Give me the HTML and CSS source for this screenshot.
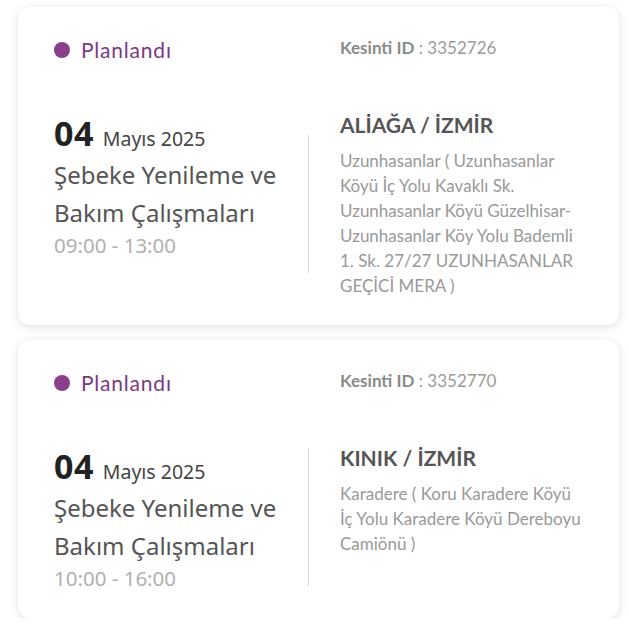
FILE: index.html
```html
<!DOCTYPE html>
<html lang="tr">
<head>
<meta charset="utf-8">
<link rel="stylesheet" href="styles.css">
</head>
<body>
<div class="list">
  <div class="card">
    <div class="top">
      <div class="status"><span class="dot"></span><span>Planlandı</span></div>
      <div class="kid"><b>Kesinti ID</b> : 3352726</div>
    </div>
    <div class="body">
      <div class="left">
        <div class="date"><span class="day">04</span> <span class="month">Mayıs 2025</span></div>
        <div class="title">Şebeke Yenileme ve Bakım Çalışmaları</div>
        <div class="time">09:00 - 13:00</div>
      </div>
      <div class="divider"></div>
      <div class="right">
        <div class="loc">ALİAĞA / İZMİR</div>
        <div class="addr">Uzunhasanlar ( Uzunhasanlar Köyü İç Yolu Kavaklı Sk. Uzunhasanlar Köyü Güzelhisar-Uzunhasanlar Köy Yolu Bademli 1. Sk. 27/27 UZUNHASANLAR GEÇİCİ MERA )</div>
      </div>
    </div>
  </div>
  <div class="card">
    <div class="top">
      <div class="status"><span class="dot"></span><span>Planlandı</span></div>
      <div class="kid"><b>Kesinti ID</b> : 3352770</div>
    </div>
    <div class="body">
      <div class="left">
        <div class="date"><span class="day">04</span> <span class="month">Mayıs 2025</span></div>
        <div class="title">Şebeke Yenileme ve Bakım Çalışmaları</div>
        <div class="time">10:00 - 16:00</div>
      </div>
      <div class="divider"></div>
      <div class="right">
        <div class="loc">KINIK / İZMİR</div>
        <div class="addr">Karadere ( Koru Karadere Köyü İç Yolu Karadere Köyü Dereboyu Camiönü )</div>
      </div>
    </div>
  </div>
</div>
</body>
</html>
```

FILE: styles.css
```css
html, body {
  margin: 0;
  padding: 0;
  background: #ffffff;
}
.list {
  display: flex;
  flex-direction: column;
  gap: 15px;
  padding: 7px 10px 0 18px;
}
.card {
  background: #fff;
  border-radius: 12px;
  box-shadow: 0 2px 10px rgba(0,0,0,0.12);
  padding: 29px 36px 27px 36px;
}
.top {
  display: flex;
  align-items: flex-start;
}
.status {
  width: 286px;
  display: flex;
  align-items: center;
  gap: 11px;
  font-family: Lato, "Liberation Sans", sans-serif;
  font-size: 21px;
  letter-spacing: 0.8px;
  line-height: 28px;
  color: #7a3a80;
}
.dot {
  width: 16px;
  height: 16px;
  border-radius: 50%;
  background: #8a3f8d;
}
.kid {
  font-family: Lato, "Liberation Sans", sans-serif;
  font-size: 17px;
  line-height: 20px;
  margin-top: 2px;
  color: #9a9a9a;
}
.kid b {
  color: #8a8a8a;
  font-weight: 700;
}
.body {
  display: flex;
  align-items: flex-start;
  margin-top: 46px;
}
.left {
  width: 254px;
  font-family: "Noto Sans", sans-serif;
}
.date {
  font-size: 34px;
  line-height: 46px;
}
.day {
  font-weight: 700;
  color: #222;
  letter-spacing: 0.5px;
}
.month {
  font-size: 19.5px;
  line-height: 1;
  color: #444;
}
.title {
  font-size: 24px;
  line-height: 38px;
  color: #555;
}
.time {
  font-size: 20.5px;
  line-height: 26px;
  color: #b0b0b0;
}
.divider {
  width: 1px;
  height: 138px;
  background: #d6d6d6;
  align-self: center;
  margin-right: 31px;
}
.right {
  flex: 1;
  font-family: Lato, "Liberation Sans", sans-serif;
}
.loc {
  font-size: 21px;
  font-weight: 700;
  color: #555;
  line-height: 30px;
  margin-bottom: 8px;
}
.addr {
  font-size: 17px;
  line-height: 25px;
  color: #999;
}
```
